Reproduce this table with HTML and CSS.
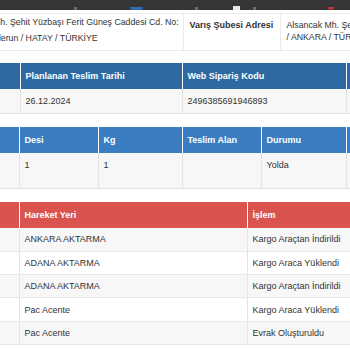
FILE: index.html
```html
<!DOCTYPE html>
<html lang="tr">
<head>
<meta charset="utf-8">
<title>Kargo Takip</title>
<link rel="stylesheet" href="styles.css">
</head>
<body>
<div class="topbar">
  <span class="ic ic-gray ic-a"></span>
  <span class="ic ic-blue ic-b"></span>
  <span class="ic ic-gray ic-c"></span>
  <span class="ic ic-white ic-d"></span>
  <span class="ic ic-gray ic-e"></span>
  <span class="ic ic-red ic-f"></span>
</div>
<div class="page">
  <table class="tbl addr">
    <colgroup><col class="w213"><col class="w97"><col></colgroup>
    <tr>
      <td class="addr-val">Çay Mh. Şehit Yüzbaşı Ferit Güneş Caddesi Cd. No:<br>İskenderun / HATAY / TÜRKİYE</td>
      <td class="addr-label">Varış Şubesi Adresi</td>
      <td class="addr-val2">Alsancak Mh. Şehit Yüzbaşı Ferit Güneş Caddesi No: 5 Çankaya<br>/ ANKARA / TÜRKİYE</td>
    </tr>
  </table>

  <table class="tbl blue1">
    <colgroup><col class="w50"><col class="w162"><col class="w164"><col></colgroup>
    <tr class="hd"><th></th><th>Planlanan Teslim Tarihi</th><th>Web Sipariş Kodu</th><th></th></tr>
    <tr class="row24 alt"><td></td><td>26.12.2024</td><td>2496385691946893</td><td></td></tr>
  </table>

  <table class="tbl blue2">
    <colgroup><col class="w49"><col class="w79"><col class="w84"><col class="w79"><col class="w85"><col></colgroup>
    <tr class="hd"><th></th><th>Desi</th><th>Kg</th><th>Teslim Alan</th><th>Durumu</th><th></th></tr>
    <tr class="row36 alt"><td></td><td>1</td><td>1</td><td></td><td>Yolda</td><td></td></tr>
  </table>

  <table class="tbl red">
    <colgroup><col class="w49"><col class="w228"><col></colgroup>
    <tr class="hd"><th></th><th>Hareket Yeri</th><th>İşlem</th></tr>
    <tr class="mv alt"><td></td><td>ANKARA AKTARMA</td><td>Kargo Araçtan İndirildi</td></tr>
    <tr class="mv"><td></td><td>ADANA AKTARMA</td><td>Kargo Araca Yüklendi</td></tr>
    <tr class="mv alt"><td></td><td>ADANA AKTARMA</td><td>Kargo Araçtan İndirildi</td></tr>
    <tr class="mv"><td></td><td>Pac Acente</td><td>Kargo Araca Yüklendi</td></tr>
    <tr class="mv alt"><td></td><td>Pac Acente</td><td>Evrak Oluşturuldu</td></tr>
  </table>
</div>
</body>
</html>
```
FILE: styles.css
```css
html, body {
  margin: 0;
  padding: 0;
  background: #fff;
  overflow: hidden;
}
body {
  font-family: "Liberation Sans", Arial, sans-serif;
  font-size: 9px;
  color: #333;
}
.topbar {
  height: 10px;
  background: #363636;
  display: flex;
  align-items: flex-end;
}
.ic { display: block; flex: none; }
.ic-gray { width: 3px; height: 3px; background: #6a6a6a; }
.ic-blue { width: 13px; height: 3px; background: #2f6cb0; border-radius: 0 0 6px 6px; }
.ic-white { width: 7px; height: 4px; background: #e8e8e8; }
.ic-red { width: 6px; height: 3px; background: #c9303a; border-radius: 0 0 3px 3px; }
.ic-a { margin-left: 74px; }
.ic-b { margin-left: 53px; }
.ic-c { margin-left: 52px; }
.ic-d { margin-left: 35px; }
.ic-e { margin-left: 13px; }
.ic-f { margin-left: 72px; }

.page {
  margin-left: -30px;
  width: 430px;
  margin-top: 3px;
}
.tbl {
  width: 430px;
  table-layout: fixed;
  border-collapse: collapse;
  border-spacing: 0;
}
.w49 { width: 49px; }
.w50 { width: 50px; }
.w79 { width: 79px; }
.w84 { width: 84px; }
.w85 { width: 85px; }
.w97 { width: 97px; }
.w162 { width: 162px; }
.w164 { width: 164px; }
.w213 { width: 213px; }
.w228 { width: 228px; }

.tbl td, .tbl th {
  box-sizing: border-box;
  padding: 0 5px;
  white-space: nowrap;
  overflow: hidden;
  text-align: left;
  font-weight: normal;
  line-height: 12px;
}

/* address table */
.addr { margin-bottom: 12px; }
.addr td {
  border: 1px solid #ebebeb;
  height: 37px;
  vertical-align: top;
}
.addr .addr-val { padding-top: 0; line-height: 16px; font-size: 8.75px; }
.addr .addr-label { font-weight: bold; color: #333; padding-top: 5px; padding-left: 6px; }
.addr .addr-val2 { padding-top: 5px; line-height: 12px; padding-left: 6px; font-size: 8.75px; }

/* headers */
.hd th {
  height: 26px;
  color: #fff;
  font-weight: bold;
  vertical-align: middle;
  border-left: 1px solid rgba(255, 255, 255, 0.28);
}
.hd th:first-child { border-left: 0; }
.blue1 .hd { background: #2c6aa1; }
.blue2 .hd { background: #3a7ec1; }
.red .hd { background: #d9534f; }

.tbl tr.alt { background: #f7f7f7; }
.tbl tr td { border-left: 1px solid #e4e4e4; }
.tbl tr td:first-child { border-left: 0; }

.blue1 { margin-bottom: 13px; }
.blue1 .row24 td {
  height: 24px;
  border-bottom: 1px solid #e4e4e4;
  vertical-align: middle;
}
.blue2 { margin-bottom: 13px; }
.blue2 .row36 td {
  height: 36px;
  border-bottom: 1px solid #e4e4e4;
  vertical-align: top;
  padding-top: 6px;
}
.red .mv td {
  height: 23.3px;
  border-bottom: 1px solid #e8e8e8;
  vertical-align: middle;
}
```
